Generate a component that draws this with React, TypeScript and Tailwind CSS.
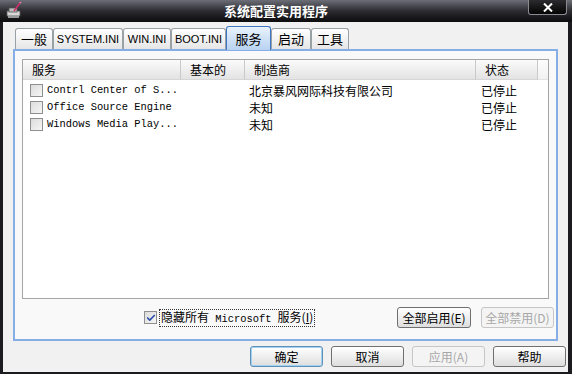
import { Check } from 'lucide-react';

const cjk = { fontFamily: '"Noto Sans CJK SC", "Liberation Sans", sans-serif' };
const tahoma = { fontFamily: '"Liberation Sans", "Noto Sans CJK SC", sans-serif' };
const mono = { fontFamily: '"Liberation Mono", "Noto Sans CJK SC", monospace' };

const tabs = [
  { label: '一般', w: 38, cjk: true },
  { label: 'SYSTEM.INI', w: 70 },
  { label: 'WIN.INI', w: 48 },
  { label: 'BOOT.INI', w: 55 },
  { label: '服务', w: 45, cjk: true, active: true },
  { label: '启动', w: 40, cjk: true },
  { label: '工具', w: 38, cjk: true },
];

const rows = [
  { name: 'Contrl Center of S...', maker: '北京暴风网际科技有限公司', state: '已停止' },
  { name: 'Office Source Engine', maker: '未知', state: '已停止' },
  { name: 'Windows Media Play...', maker: '未知', state: '已停止' },
];

function Box({ checked }: { checked?: boolean }) {
  return (
    <div className="w-[13px] h-[13px] border border-[#8e8f8f] bg-gradient-to-br from-[#dcdcdc] to-[#f6f6f6] flex items-center justify-center shrink-0">
      {checked && <Check className="w-[10px] h-[10px] text-[#2b4fa8]" strokeWidth={4} />}
    </div>
  );
}

function Btn({ label, w, disabled, def }: { label: string; w: number; disabled?: boolean; def?: boolean }) {
  return (
    <div
      className={`h-[21px] rounded-[3px] border flex items-center justify-center text-[12px] ${
        disabled
          ? 'border-[#c6c6c6] bg-[#f4f4f4] text-[#a7a7a7]'
          : def
          ? 'border-[#5f8fb8] bg-gradient-to-b from-[#ffffff] to-[#dedede] text-black shadow-[inset_0_0_0_1px_#9fd3f0]'
          : 'border-[#707070] bg-gradient-to-b from-[#ffffff] to-[#dedede] text-black'
      }`}
      style={{ ...cjk, width: w }}
    >
      {label}
    </div>
  );
}

export default function App() {
  return (
    <div className="w-[572px] h-[374px] bg-[#1c1c20] flex flex-col overflow-hidden">
      {/* title bar */}
      <div className="h-[22px] relative flex items-center justify-center pr-[20px] bg-gradient-to-b from-[#6e6e78] via-[#2c2c32] to-[#0c0c0e]">
        <svg className="absolute left-[5px] top-[2px]" width="18" height="17" viewBox="0 0 18 17">
          <rect x="2" y="9" width="13" height="5" fill="#d8d8d8" stroke="#555" strokeWidth="0.8" />
          <rect x="4" y="6" width="8" height="4" fill="#bdbdbd" stroke="#555" strokeWidth="0.8" />
          <rect x="3" y="14" width="11" height="2" fill="#9a9a9a" />
          <path d="M9 9 L15 1" stroke="#d0306a" strokeWidth="1.6" />
          <path d="M15 1 L16 0" stroke="#ff88b0" strokeWidth="1.6" />
        </svg>
        <span className="text-white font-bold text-[13px]" style={cjk}>
          系统配置实用程序
        </span>
        <div className="absolute right-[5px] top-0 w-[39px] h-[15px] bg-gradient-to-b from-[#2c2c30] to-[#050505] border border-t-0 border-[#8a8a90] rounded-b-[3px] flex items-center justify-center">
          <svg width="10" height="9" viewBox="0 0 10 9">
            <path d="M1 0.5 L9 8.5 M9 0.5 L1 8.5" stroke="#fff" strokeWidth="2" />
          </svg>
        </div>
      </div>

      {/* body */}
      <div className="flex-1 bg-[#f1f1f1] border-x-[3px] border-b-2 border-[#1c1c20] border-r-4 flex flex-col">
        {/* tabs */}
        <div className="flex items-end h-[27px] pl-[12px]">
          {tabs.map((t) => (
            <div
              key={t.label}
              className={`flex items-center justify-center rounded-t-[3px] border border-b-0 text-black ${
                t.active
                  ? 'h-[24px] border-[#3f74c2] bg-gradient-to-b from-[#e9f2fc] to-[#b8d2f1] text-[13px] -mb-px relative z-10'
                  : 'h-[21px] border-[#9aa1a4] bg-gradient-to-b from-[#ffffff] to-[#e6e6e6] ' + (t.cjk ? 'text-[13px]' : 'text-[11px]')
              }`}
              style={{ ...(t.cjk ? cjk : tahoma), width: t.w }}
            >
              {t.label}
            </div>
          ))}
        </div>

        {/* panel */}
        <div className="ml-[10px] w-[545px] h-[292px] border-2 border-[#86ade5] bg-[#f9f9f9] flex flex-col px-[7px] pt-[8px]">
          <div className="h-[240px] bg-white border border-[#a5a5a5] flex flex-col">
            {/* header */}
            <div className="flex h-[20px] text-[12px] text-black" style={cjk}>
              {[
                { l: '服务', w: 158 },
                { l: '基本的', w: 64 },
                { l: '制造商', w: 231 },
                { l: '状态', w: 62 },
              ].map((c) => (
                <div
                  key={c.l}
                  className="h-full flex items-center pl-[9px] bg-gradient-to-b from-[#fbfbfb] to-[#e3e3e3] border-r border-[#c9c9c9] border-b border-b-[#d6d6d6]"
                  style={{ width: c.w }}
                >
                  {c.l}
                </div>
              ))}
              <div className="flex-1 h-full bg-gradient-to-b from-[#fdfdfd] to-[#f1f1f1] border-b border-[#e2e2e2]" />
            </div>
            {/* rows */}
            <div className="flex flex-col pt-[2px]">
              {rows.map((r) => (
                <div key={r.name} className="flex h-[17px] items-center text-[12px] text-black">
                  <div className="w-[158px] flex items-center pl-[7px] gap-[4px]">
                    <Box />
                    <span className="text-[10.4px] whitespace-pre" style={mono}>
                      {r.name}
                    </span>
                  </div>
                  <div className="w-[64px]" />
                  <div className="w-[231px] pl-[4px]" style={cjk}>
                    {r.maker}
                  </div>
                  <div className="w-[62px] pl-[5px]" style={cjk}>
                    {r.state}
                  </div>
                </div>
              ))}
            </div>
          </div>

          {/* bottom row in panel */}
          <div className="flex items-center mt-[8px] h-[21px]">
            <div className="ml-[122px] flex items-center gap-[2px]">
              <Box checked />
              <span className="text-[12px] border border-dotted border-[#333] px-px leading-[14px] whitespace-pre" style={cjk}>
                隐藏所有<span className="text-[10.4px]" style={mono}> Microsoft </span>服务(<span className="underline">I</span>)
              </span>
            </div>
            <div className="ml-auto flex gap-[10px] -mr-[5px]">
              <Btn label="全部启用(E)" w={74} />
              <Btn label="全部禁用(D)" w={73} disabled />
            </div>
          </div>
        </div>

        {/* dialog buttons */}
        <div className="flex justify-end gap-[8px] pr-[2px] mt-[5px]">
          <Btn label="确定" w={73} def />
          <Btn label="取消" w={73} />
          <Btn label="应用(A)" w={73} disabled />
          <Btn label="帮助" w={73} />
        </div>
      </div>
    </div>
  );
}
